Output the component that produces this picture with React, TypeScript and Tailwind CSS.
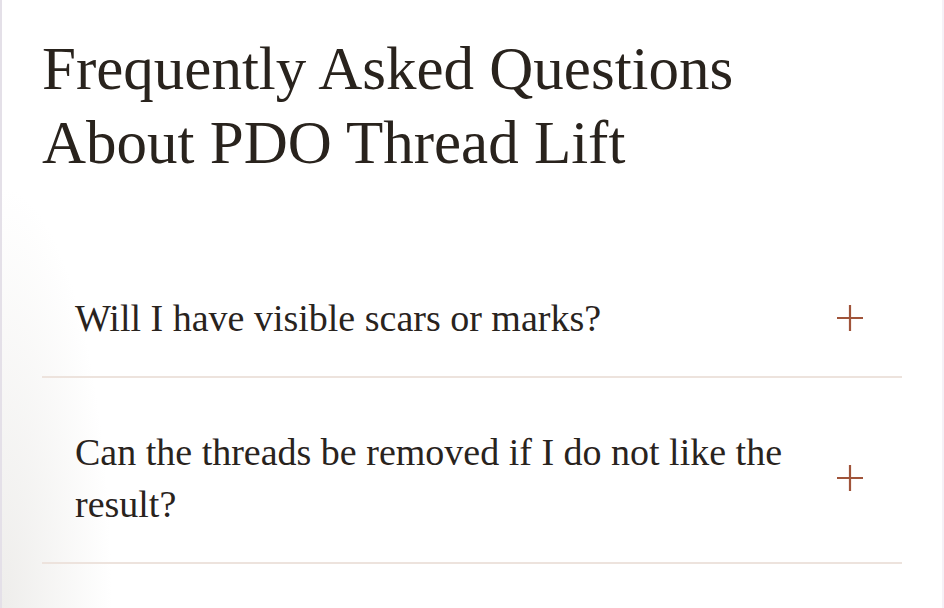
import React from "react";

type Faq = { q: string };

const faqs: Faq[] = [
  { q: "Will I have visible scars or marks?" },
  { q: "Can the threads be removed if I do not like the result?" },
];

function PlusIcon() {
  return (
    <svg width="26" height="26" viewBox="0 0 26 26" aria-hidden="true" className="shrink-0">
      <path d="M13 0V26M0 13H26" stroke="#a0543a" strokeWidth="2.2" fill="none" />
    </svg>
  );
}

function FaqRow({ q }: { q: string }) {
  return (
    <div className="flex items-center gap-5 border-b-2 border-[#ede3dd] pl-[33px] pr-[39px] pt-[48px] pb-[32px]">
      <p className="flex-1 text-[38px] leading-[52px] text-[#29231d]">{q}</p>
      <PlusIcon />
    </div>
  );
}

export default function App() {
  return (
    <div
      className="h-[608px] w-full overflow-hidden border-l-2 border-r-2 border-l-[#e4e0e8] border-r-[#f5f1f7] bg-[radial-gradient(ellipse_110px_420px_at_0%_100%,#eeedeb,#ffffff)] px-[40px] pt-[32px]"
      style={{ fontFamily: '"Liberation Serif", "Times New Roman", serif' }}
    >
      <h2 className="text-[61px] leading-[74px] font-normal text-[#29231d]">
        Frequently Asked Questions
        <br />
        About PDO Thread Lift
      </h2>
      <div className="mt-[64px] flex flex-col">
        {faqs.map((f) => (
          <FaqRow key={f.q} q={f.q} />
        ))}
      </div>
    </div>
  );
}
